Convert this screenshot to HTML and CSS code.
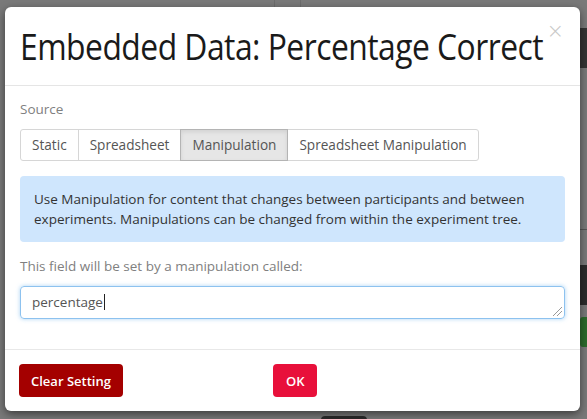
FILE: index.html
```html
<!DOCTYPE html>
<html lang="en">
<head>
<meta charset="utf-8">
<title>Embedded Data</title>
<link rel="stylesheet" href="styles.css">
</head>
<body>
<div class="backdrop">
  <div class="bd-line bd-line-a"></div>
  <div class="bd-line bd-line-b"></div>
  <div class="bd-bar"></div>
  <div class="bd-rule"></div>
  <div class="bd-block"></div>
  <div class="bd-green"></div>
  <div class="bd-tab"></div>
</div>
<div class="modal">
  <div class="modal-header">
    <h1 class="modal-title">Embedded Data: Percentage Correct</h1>
    <span class="close">&times;</span>
  </div>
  <div class="modal-body">
    <div class="field-label">Source</div>
    <div class="btn-group">
      <button class="seg">Static</button>
      <button class="seg">Spreadsheet</button>
      <button class="seg active">Manipulation</button>
      <button class="seg">Spreadsheet Manipulation</button>
    </div>
    <div class="alert">Use Manipulation for content that changes between participants and between experiments. Manipulations can be changed from within the experiment tree.</div>
    <div class="field-label">This field will be set by a manipulation called:</div>
    <div class="textarea"><span>percentage</span><span class="caret"></span><span class="grip"></span></div>
  </div>
  <div class="modal-footer">
    <button class="btn btn-clear">Clear Setting</button>
    <button class="btn btn-ok">OK</button>
  </div>
</div>
</body>
</html>
```
FILE: styles.css
```css
html, body {
  margin: 0;
  padding: 0;
}
body {
  width: 587px;
  height: 419px;
  overflow: hidden;
  background: #797979;
  font-family: "Open Sans", "Noto Sans", sans-serif;
  position: relative;
}
.backdrop {
  position: absolute;
  inset: 0;
}
.bd-line {
  position: absolute;
  top: 0;
  width: 1px;
  height: 8px;
  background: #6c6c6c;
}
.bd-line-a { left: 274px; }
.bd-line-b { left: 300px; }
.bd-bar {
  position: absolute;
  left: 578px;
  top: 28px;
  width: 9px;
  height: 40px;
  background: #343434;
}
.bd-rule {
  position: absolute;
  left: 578px;
  top: 229px;
  width: 9px;
  height: 1px;
  background: #555;
}
.bd-block {
  position: absolute;
  left: 578px;
  top: 265px;
  width: 9px;
  height: 40px;
  background: #2c2c2c;
}
.bd-green {
  position: absolute;
  left: 580px;
  top: 317px;
  width: 7px;
  height: 30px;
  background: #2b6a2b;
  border-radius: 3px 0 0 3px;
}
.bd-tab {
  position: absolute;
  left: 321px;
  top: 416px;
  width: 46px;
  height: 10px;
  background: #2a2a2a;
  border-radius: 4px;
}

.modal {
  position: absolute;
  left: 5px;
  top: 7px;
  width: 575px;
  height: 404px;
  box-sizing: border-box;
  background: #fff;
  border-radius: 6px;
  box-shadow: 0 3px 9px rgba(0, 0, 0, 0.5);
  display: flex;
  flex-direction: column;
  overflow: hidden;
}
.modal-header {
  position: relative;
  display: flex;
  align-items: flex-start;
  padding: 18px 16px 18px 15px;
  border-bottom: 1px solid #e5e5e5;
}
.modal-title {
  margin: 0;
  width: 520px;
  font-family: "Open Sans", sans-serif;
  font-size: 37px;
  letter-spacing: -0.6px;
  line-height: 42px;
  font-weight: 400;
  color: #1a1a1a;
  white-space: nowrap;
  transform: scaleX(0.86);
  transform-origin: left center;
}
.close {
  margin-left: auto;
  margin-top: -9px;
  font-size: 21px;
  line-height: 30px;
  color: #c8c8c8;
  font-family: "DejaVu Sans", sans-serif;
  font-weight: 300;
}
.modal-body {
  padding: 14px 15px 28px 15px;
  display: flex;
  flex-direction: column;
}
.field-label {
  font-size: 13.5px;
  line-height: 18px;
  color: #808080;
}
.btn-group {
  display: flex;
  margin-top: 11px;
}
.seg {
  font-family: inherit;
  font-size: 13.6px;
  line-height: 18px;
  height: 32px;
  padding: 0 11px;
  border: 1px solid #d6d6d6;
  background: #fff;
  color: #555;
  margin-left: -1px;
  cursor: pointer;
}
.seg:first-child {
  margin-left: 0;
  border-radius: 3px 0 0 3px;
}
.seg:last-child {
  border-radius: 0 3px 3px 0;
}
.seg.active {
  background: #e6e6e6;
  border-color: #b4b4b4;
  box-shadow: inset 0 2px 4px rgba(0, 0, 0, 0.09);
  position: relative;
}
.alert {
  margin-top: 15px;
  padding: 13px 14px;
  background: #cfe6fd;
  border-radius: 4px;
  color: #333;
  font-size: 13.5px;
  line-height: 20px;
}
.alert + .field-label {
  margin-top: 15px;
}
.textarea {
  position: relative;
  margin-top: 11px;
  height: 33px;
  box-sizing: border-box;
  padding: 6px 11px 7px 11px;
  border: 1px solid #8dc2ef;
  border-radius: 4px;
  box-shadow: 0 0 4px rgba(102, 175, 233, 0.55);
  font-size: 13.5px;
  line-height: 18px;
  color: #555;
  display: flex;
  align-items: center;
}
.caret {
  display: inline-block;
  width: 1px;
  height: 16px;
  background: #222;
  margin-left: 1px;
}
.grip {
  position: absolute;
  right: 2px;
  bottom: 2px;
  width: 9px;
  height: 9px;
  background:
    linear-gradient(135deg, transparent 45%, #999 45%, #999 52%, transparent 52%, transparent 70%, #999 70%, #999 77%, transparent 77%);
}
.modal-footer {
  margin-top: auto;
  border-top: 1px solid #e8e8e8;
  padding: 14px 14px 14px 14px;
  display: flex;
  gap: 150px;
}
.btn {
  font-family: inherit;
  font-size: 13px;
  font-weight: 600;
  line-height: 18px;
  height: 33px;
  padding: 0 12px;
  border: none;
  border-radius: 4px;
  color: #fff;
  cursor: pointer;
}
.btn-clear {
  background: #a40000;
}
.btn-ok {
  background: #e8103b;
  padding: 0 13px;
}
```
